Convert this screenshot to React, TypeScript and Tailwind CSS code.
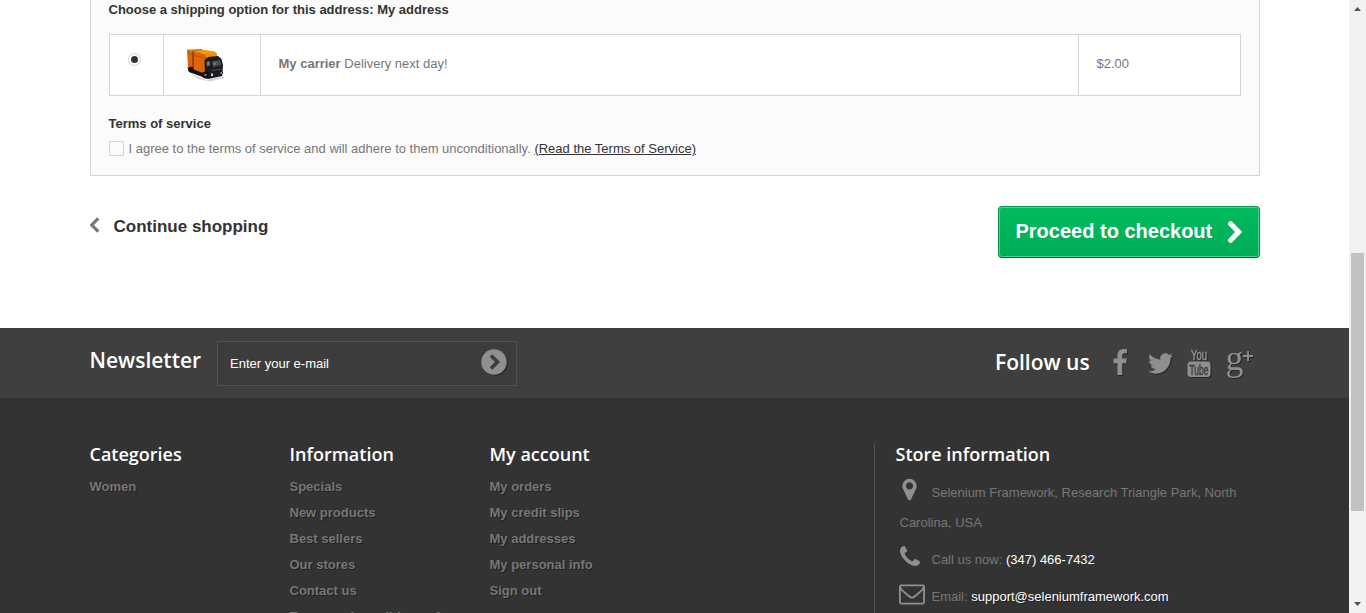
import type { ReactNode } from 'react';
import { FaTwitter } from 'react-icons/fa';

const shade = '[filter:drop-shadow(1px_1px_0_rgba(0,0,0,0.4))]';

function Truck() {
  return (
    <svg width="40" height="40" viewBox="0 0 40 40" className="block">
      <path d="M4 28 L20 35 L37 31 L38 33 L24 36.500 L12 34Z" fill="#d5d5d5" />
      <path d="M1.500 22 L20 28 L37 27 L36 31 L22 34 L3 27Z" fill="#151515" />
      <path d="M1 4.500 L12 4 L29 6.500 L31 10 L19 12Z" fill="#f7960f" />
      <path d="M1 4.500 L19 9.500 L31 8.500 L31 12 L21 14 L20 29 L2 22.500Z" fill="#dc650a" />
      <path d="M19 9.500 L31 8.500 L31 12 L21 14Z" fill="#f08a14" />
      <path d="M6 6 L8 6.500 L8 25 L6 24.300Z" fill="#a84205" />
      <path d="M6 6 L16 4.500" stroke="#c4660c" strokeWidth="1" />
      <path d="M2 9 L20 13.500" stroke="#b34806" strokeWidth="0.800" />
      <path d="M18.500 15 L22 12 L32 11 L35.500 14 L37 20 L36.500 29 L33 31 L22 33 L19 29Z" fill="#1b1c1f" />
      <path d="M26 16.500 L34 15 L35.500 20 L27 22Z" fill="#454b51" />
      <path d="M27 17.500 L31 16.500 L29.500 20 L27.500 20.500Z" fill="#697078" />
      <path d="M20.500 17 L23.500 16 L24 20.500 L21 21Z" fill="#737a80" />
      <path d="M26 25.500 L36 24" stroke="#4c4c4c" strokeWidth="1" />
      <circle cx="5" cy="24.500" r="2.800" fill="#111" />
      <circle cx="19.500" cy="30" r="3.400" fill="#111" />
      <circle cx="19.500" cy="30" r="1.300" fill="#777" />
      <rect x="25" y="28.500" width="2" height="2.500" fill="#d8d2b8" />
      <rect x="34.500" y="27" width="1.500" height="2" fill="#99958a" />
    </svg>
  );
}

function FacebookIcon() {
  return (
    <svg width="28" height="28" viewBox="0 0 1792 1792" fill="#8f8f8f" className={shade}>
      <path d="M1343 12v264h-157q-86 0-116 36t-30 108v189h293l-39 296h-254v759h-306v-759h-255v-296h255v-218q0-186 104-288.500t277-102.500q147 0 228 12z" />
    </svg>
  );
}

function YoutubeIcon() {
  return (
    <svg width="24" height="28" viewBox="0 0 24 28" className={`overflow-visible ${shade}`}>
      <text x="4" y="11" textLength="16" lengthAdjust="spacingAndGlyphs" fontFamily="Liberation Sans Narrow, Liberation Sans, sans-serif" fontSize="15" fill="#8f8f8f" stroke="#8f8f8f" strokeWidth="0.600">You</text>
      <rect x="0.500" y="12.500" width="23" height="15.500" rx="3.500" fill="#8f8f8f" />
      <text x="2.500" y="26" textLength="19" lengthAdjust="spacingAndGlyphs" fontFamily="Liberation Sans Narrow, Liberation Sans, sans-serif" fontSize="15" fill="#3f3f3f" stroke="#3f3f3f" strokeWidth="0.600">Tube</text>
    </svg>
  );
}

function GooglePlusIcon() {
  return (
    <svg width="28" height="32" viewBox="0 0 28 32" className={`overflow-visible ${shade}`}>
      <text x="0.500" y="20.500" textLength="18" lengthAdjust="spacingAndGlyphs" fontFamily="Liberation Serif, serif" fontSize="36" fill="#8f8f8f">g</text>
      <path d="M18 7h10M23 2v10" stroke="#8f8f8f" strokeWidth="1.800" />
    </svg>
  );
}

function PinIcon() {
  return (
    <svg width="25" height="25" viewBox="0 0 1792 1792" fill="#8f8f8f">
      <path d="M1152 640q0-106-75-181t-181-75-181 75-75 181 75 181 181 75 181-75 75-181zm256 0q0 109-33 179l-364 774q-16 33-47.500 52t-67.500 19-67.500-19-46.500-52l-365-774q-33-70-33-179 0-212 150-362t362-150 362 150 150 362z" />
    </svg>
  );
}

function PhoneIcon() {
  return (
    <svg width="20" height="20" viewBox="192 128 1408 1408" fill="#8f8f8f">
      <path d="M1600 1240q0 27-10 70.500t-21 68.500q-21 50-122 106-94 51-186 51-27 0-53-3.500t-57.500-12.500-47-14.500-55.500-20.500-49-18q-98-35-175-83-127-79-264-216t-216-264q-48-77-83-175-3-9-18-49t-20.500-55.500-14.500-47-12.500-57.500-3.500-53q0-92 51-186 56-101 106-122 25-11 68.500-21t70.500-10q14 0 21 3 18 6 53 76 11 19 30 54t35 63.500 31 53.500q3 4 17.500 25t21.500 35.500 7 28.500q0 20-28.500 50t-62 55-62 53-28.500 46q0 9 5 22.500t8.500 20.500 14 24 11.500 19q76 137 174 235t235 174q2 1 19 11.500t24 14 20.500 8.500 22.500 5q18 0 46-28.500t53-62 55-62 50-28.500q14 0 28.500 7t35.500 21.500 25 17.500q25 15 53.500 31t63.500 35 54 30q70 35 76 53 3 7 3 21z" />
    </svg>
  );
}

function EnvelopeIcon() {
  return (
    <svg width="26" height="21" viewBox="0 0 26 21" fill="none" stroke="#8f8f8f" strokeWidth="1.800">
      <rect x="0.900" y="1.400" width="24.200" height="18.200" rx="1.500" />
      <path d="M1.200 3.200C2 6 5 8 9.500 11.700C11.500 13.400 12.200 13.700 13 13.700S14.500 13.400 16.500 11.700C21 8 24 6 24.800 3.200" />
    </svg>
  );
}

function Heading({ children }: { children: ReactNode }) {
  return <h4 className="font-['Open_Sans',sans-serif] text-[18px] font-semibold leading-[22px] text-white">{children}</h4>;
}

function LinkColumn({ title, links }: { title: string; links: string[] }) {
  return (
    <section className="w-[200px] shrink-0">
      <Heading>{title}</Heading>
      <ul className="mt-[9px]">
        {links.map((link) => (
          <li key={link} className="h-[26px] whitespace-nowrap pt-[4px] text-[13px] font-bold leading-[18px] text-[#777] [text-shadow:1px_1px_0_rgba(0,0,0,0.4)]">
            {link}
          </li>
        ))}
      </ul>
    </section>
  );
}

function Shipping() {
  return (
    <section className="h-[176px] border border-t-0 border-[#d6d4d4] bg-[#fbfbfb] px-[18px] pt-px text-[13px] leading-[18px] text-[#777]">
      <p className="font-bold text-[#333]">Choose a shipping option for this address: My address</p>
      <div className="mt-[15px] flex h-[62px] border border-[#d6d4d4] bg-white">
        <div className="flex w-[54px] justify-center border-r border-[#d6d4d4] pt-[18px] pr-[4px]">
          <span className="flex size-[13px] items-center justify-center rounded-full border border-[#d6d4d4] bg-white">
            <span className="size-[7px] rounded-full bg-[#333]" />
          </span>
        </div>
        <div className="w-[97px] border-r border-[#d6d4d4] pl-[22px] pt-[10px]"><Truck /></div>
        <div className="grow border-r border-[#d6d4d4] pl-[18px] pt-[20px]"><b>My carrier</b> Delivery next day!</div>
        <div className="w-[161px] pl-[18px] pt-[20px]">$2.00</div>
      </div>
      <p className="mt-[19px] font-bold text-[#333]">Terms of service</p>
      <div className="mt-[7px] flex items-start">
        <span className="mr-[5px] mt-px size-[15px] border border-[#d6d4d4]" />
        <span>I agree to the terms of service and will adhere to them unconditionally. <a className="text-[#333] underline">(Read the Terms of Service)</a></span>
      </div>
    </section>
  );
}

function Scrollbar() {
  return (
    <aside className="flex w-[17px] shrink-0 flex-col items-center bg-[#f1f1f1]">
      <svg width="7" height="4" viewBox="0 0 7 4" className="mt-[7px]" fill="#505050"><path d="M3.500 0L7 4H0z" /></svg>
      <div className="mt-[242px] h-[258px] w-[13px] bg-[#c1c1c1]" />
      <svg width="7" height="4" viewBox="0 0 7 4" className="mt-[91px]" fill="#505050"><path d="M3.500 4L0 0h7z" /></svg>
    </aside>
  );
}

export default function App() {
  return (
    <div className="flex h-[613px] w-[1366px] overflow-hidden bg-white font-['Liberation_Sans',Arial,sans-serif]">
      <div className="flex h-[613px] w-[1349px] flex-col overflow-hidden">
        <main className="h-[328px] shrink-0 px-[89.5px]">
          <Shipping />
          <div className="mt-[30px] flex justify-between">
            <a className="flex h-[41px] items-center text-[17px] font-bold text-[#333]">
              <svg width="10" height="16" viewBox="0 0 10 16" fill="none" stroke="#777" strokeWidth="3.200" className="mb-[3px] mr-[14px]"><path d="M8.300 1.300L1.800 8l6.500 6.700" /></svg>
              <span className="pt-px">Continue shopping</span>
            </a>
            <button className="flex h-[52px] w-[262px] rounded-[4px] border border-t-[#009645] border-x-[#08914a] border-b-[#006a37] bg-linear-to-b from-[#00bb5e] to-[#00ac58] pl-[17px] pt-[12px] text-[20px] font-bold leading-6 text-white shadow-[inset_0_0_0_1px_#48d489]">
              Proceed to checkout
              <svg width="16" height="24" viewBox="0 0 16 24" fill="none" stroke="white" strokeWidth="5.200" strokeLinecap="round" className="ml-[15px] mt-[1px]"><path d="M3.600 3.800L11.600 12l-8 8.200" strokeLinejoin="miter" /></svg>
            </button>
          </div>
        </main>
        <footer className="flex grow flex-col bg-[#333]">
          <div className="flex h-[70px] shrink-0 bg-[#3f3f3f] pl-[89.5px] pr-[96px]">
            <h4 className="w-[127.5px] pt-[18px] font-['Open_Sans',sans-serif] text-[21px] font-semibold leading-[28px] text-white">Newsletter</h4>
            <div className="mt-[13px] flex h-[45px] w-[300px] items-center justify-between border border-[#515151] bg-[#3c3c3c] pl-[12px] pr-[9px] text-[13px] text-white">
              <span>Enter your e-mail</span>
              <svg width="26" height="26" viewBox="0 0 26 26" className={`mb-[3px] ${shade}`}>
                <circle cx="13" cy="13" r="12.700" fill="#908f8f" />
                <path d="M10 6.500L16.500 13 10 19.500" fill="none" stroke="#3c3c3c" strokeWidth="3.600" />
              </svg>
            </div>
            <div className="ml-auto flex">
              <h4 className="w-[110.5px] pt-[20px] font-['Open_Sans',sans-serif] text-[21px] font-semibold leading-[28px] text-white">Follow us</h4>
              <div className="flex w-[147.5px] justify-between pt-[21px]">
                <FacebookIcon />
                <FaTwitter size={25} color="#8f8f8f" className={`mt-[2px] ${shade}`} />
                <YoutubeIcon />
                <GooglePlusIcon />
              </div>
            </div>
          </div>
          <div className="flex pl-[89.5px] pt-[45px]">
            <LinkColumn title="Categories" links={['Women']} />
            <LinkColumn title="Information" links={['Specials', 'New products', 'Best sellers', 'Our stores', 'Contact us', 'Terms and conditions of use']} />
            <LinkColumn title="My account" links={['My orders', 'My credit slips', 'My addresses', 'My personal info', 'Sign out']} />
            <section className="ml-[184.5px] h-[190px] w-[385px] border-l border-[#515151] pl-[20.5px] text-[13px] leading-[30px] text-[#777]">
              <Heading>Store information</Heading>
              <div className="mt-[13px] pl-[4px]">
                <span className="float-left -ml-[4px] -mt-px mr-[11px] w-[22px] pl-[1px]"><PinIcon /></span>
                <p className="w-[345px]"><span className="pl-[3px]">Selenium Framework, Research Triangle Park, North</span><br />Carolina, USA</p>
              </div>
              <div className="mt-[7px] flex h-[30px] pl-[4px]">
                <span className="w-[32px] pt-[1px]"><PhoneIcon /></span>
                <p>Call us now: <span className="text-white">(347) 466-7432</span></p>
              </div>
              <div className="mt-[7px] flex h-[30px] pl-[3.5px]">
                <span className="w-[32.5px] pt-[2px]"><EnvelopeIcon /></span>
                <p>Email: <span className="text-white [text-shadow:1px_1px_0_rgba(0,0,0,0.4)]">support@seleniumframework.com</span></p>
              </div>
            </section>
          </div>
        </footer>
      </div>
      <Scrollbar />
    </div>
  );
}
